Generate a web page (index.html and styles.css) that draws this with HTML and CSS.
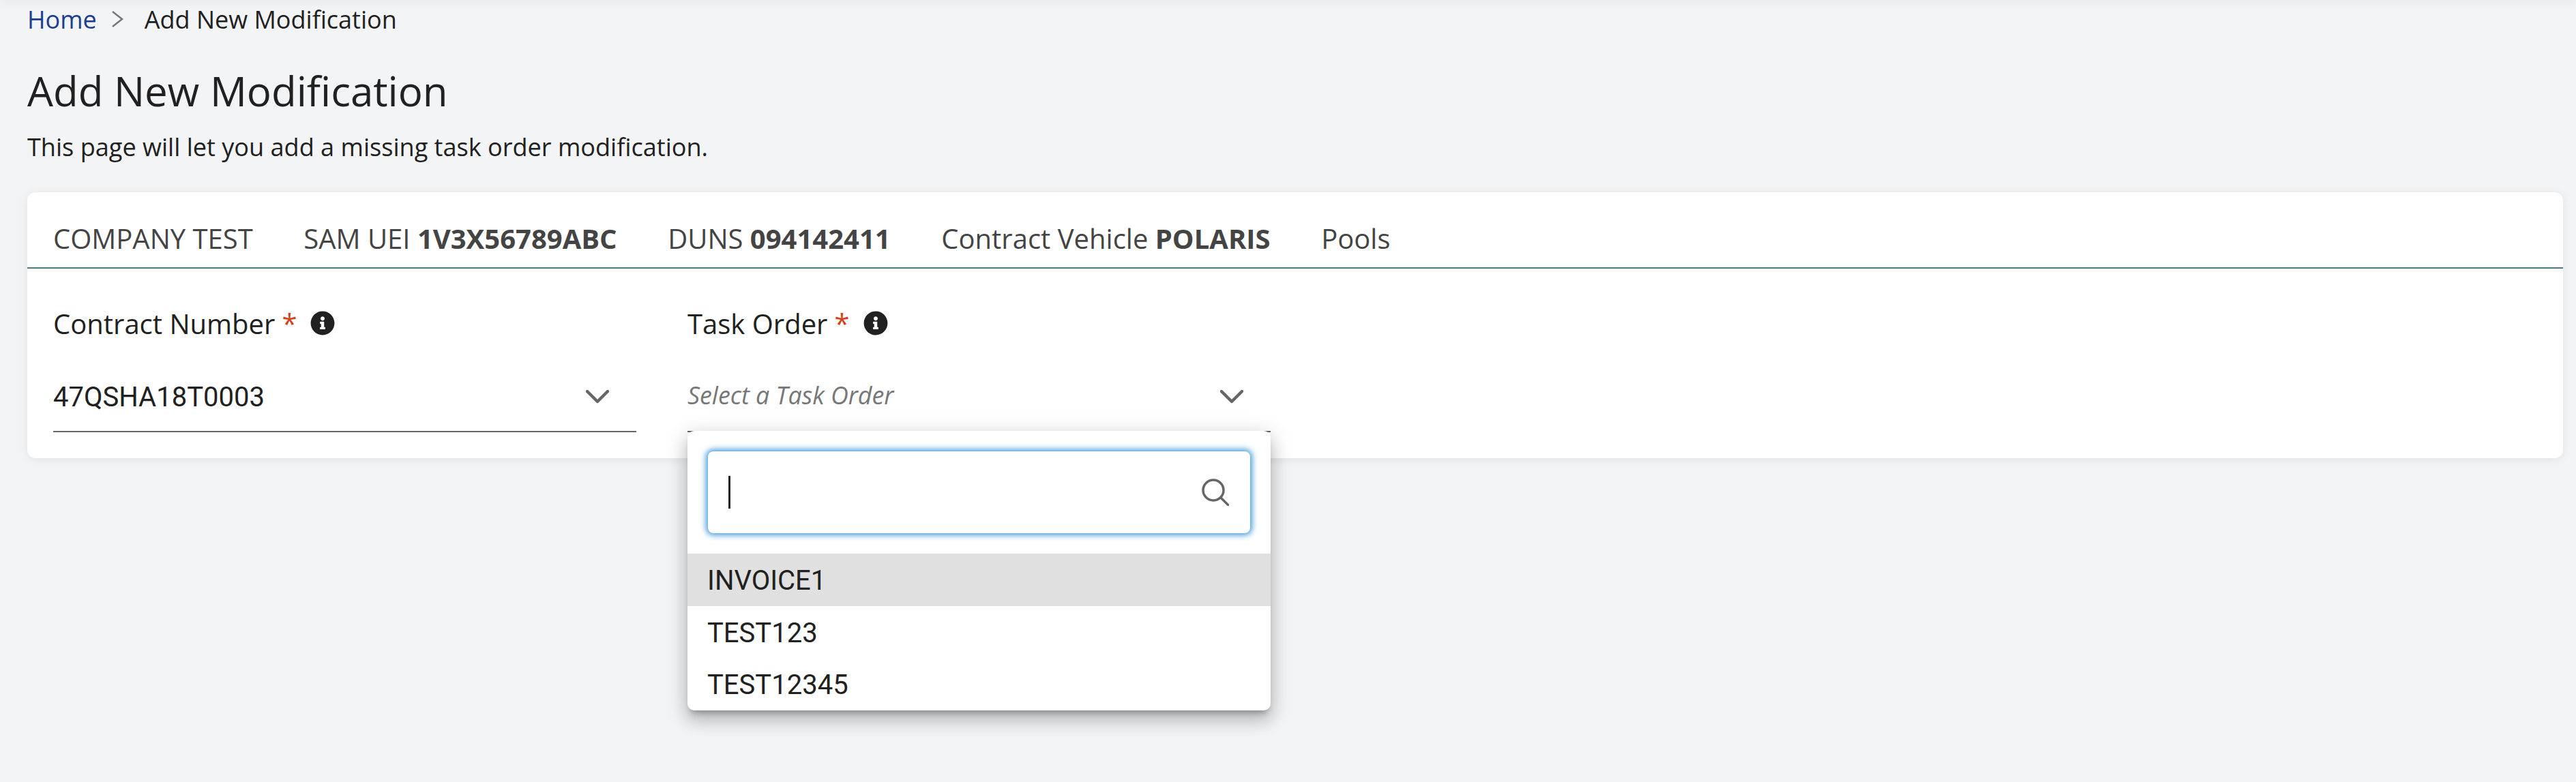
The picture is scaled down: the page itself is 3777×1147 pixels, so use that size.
FILE: index.html
```html
<!DOCTYPE html>
<html lang="en">
<head>
<meta charset="UTF-8" />
<title>Add New Modification</title>
<link rel="stylesheet" href="styles.css">
</head>
<body>

<div class="topbar"></div>

<main class="page">
  <nav class="breadcrumb">
    <a href="#">Home</a>
    <svg class="crumb-sep" viewBox="0 0 18 26"><path d="M2 2l14 11L2 24" /></svg>
    <span>Add New Modification</span>
  </nav>

  <h1>Add New Modification</h1>
  <p class="intro">This page will let you add a missing task order modification.</p>

  <section class="card">
    <div class="vendor-bar">
      <span>COMPANY TEST</span>
      <span>SAM UEI <b>1V3X56789ABC</b></span>
      <span>DUNS <b>094142411</b></span>
      <span>Contract Vehicle <b>POLARIS</b></span>
      <span>Pools</span>
    </div>

    <form class="fields">
      <div class="field">
        <label>Contract Number <span class="req">*</span>
          <svg class="info" viewBox="0 0 512 512"><path d="M256 8C119.043 8 8 119.083 8 256c0 136.997 111.043 248 248 248s248-111.003 248-248C504 119.083 392.957 8 256 8zm0 110c23.196 0 42 18.804 42 42s-18.804 42-42 42-42-18.804-42-42 18.804-42 42-42zm56 254c0 6.627-5.373 12-12 12h-88c-6.627 0-12-5.373-12-12v-24c0-6.627 5.373-12 12-12h12v-64h-12c-6.627 0-12-5.373-12-12v-24c0-6.627 5.373-12 12-12h64c6.627 0 12 5.373 12 12v100h12c6.627 0 12 5.373 12 12v24z" /></svg>
        </label>
        <div class="select">
          <span class="value">47QSHA18T0003</span>
          <svg class="chevron" viewBox="0 0 34 20"><path d="M2 2l15 15L32 2" /></svg>
        </div>
      </div>

      <div class="field">
        <label>Task Order <span class="req">*</span>
          <svg class="info" viewBox="0 0 512 512"><path d="M256 8C119.043 8 8 119.083 8 256c0 136.997 111.043 248 248 248s248-111.003 248-248C504 119.083 392.957 8 256 8zm0 110c23.196 0 42 18.804 42 42s-18.804 42-42 42-42-18.804-42-42 18.804-42 42-42zm56 254c0 6.627-5.373 12-12 12h-88c-6.627 0-12-5.373-12-12v-24c0-6.627 5.373-12 12-12h12v-64h-12c-6.627 0-12-5.373-12-12v-24c0-6.627 5.373-12 12-12h64c6.627 0 12 5.373 12 12v100h12c6.627 0 12 5.373 12 12v24z" /></svg>
        </label>
        <div class="select">
          <span class="placeholder">Select a Task Order</span>
          <svg class="chevron" viewBox="0 0 34 20"><path d="M2 2l15 15L32 2" /></svg>

          <div class="popup">
            <div class="search">
              <span class="caret"></span>
              <svg class="search-icon" viewBox="0 0 40 40"><circle cx="17" cy="17" r="15" /><path d="M28 28l11 11" /></svg>
            </div>
            <ul class="options">
              <li class="active">INVOICE1</li>
              <li>TEST123</li>
              <li>TEST12345</li>
            </ul>
          </div>
        </div>
      </div>
    </form>
  </section>
</main>

</body>
</html>
```

FILE: styles.css
```css
* {
  box-sizing: border-box;
}

html, body {
  height: 100%;
}

body {
  margin: 0;
  background-color: #f3f4f6;
  color: #212121;
  font-family: "Open Sans", sans-serif;
  overflow: hidden;
}

.topbar {
  height: 0;
  box-shadow: 0 0 14px 2px rgba(0, 0, 0, 0.12);
}

.page {
  padding: 0 19px 0 40px;
}

.breadcrumb {
  display: flex;
  align-items: center;
  height: 56px;
  font-size: 36px;
}

.breadcrumb a {
  color: #1b3f94;
  text-decoration: none;
}

.crumb-sep {
  width: 18px;
  height: 26px;
  margin: 0 31px 0 21px;
  fill: none;
  stroke: #777;
  stroke-width: 2.5;
}

h1 {
  margin: 44px 0 0;
  font-size: 60px;
  font-weight: 400;
  line-height: 66px;
}

.intro {
  margin: 24px 0 0;
  font-size: 36.1px;
  line-height: 50px;
}

.card {
  margin-top: 42px;
  background-color: #fff;
  border-radius: 12px;
  box-shadow: 0 2px 14px rgba(0, 0, 0, 0.08);
}

.vendor-bar {
  display: flex;
  gap: 74.6px;
  height: 112px;
  padding: 40px 38px 0;
  border-bottom: 2px solid #4a7c80;
  color: #444;
  font-size: 40px;
  line-height: 56px;
}

.vendor-bar b {
  font-weight: 700;
}

.fields {
  display: grid;
  grid-template-columns: 855px 855px;
  gap: 75px;
  padding: 55px 38px 38px;
}

label {
  display: flex;
  align-items: center;
  gap: 10px;
  height: 50px;
  font-size: 40px;
}

.req {
  color: #d0421b;
}

.info {
  width: 36px;
  height: 36px;
  margin-left: 10px;
  fill: #212121;
}

.select {
  position: relative;
  display: flex;
  align-items: center;
  justify-content: space-between;
  height: 104px;
  margin-top: 31px;
  border-bottom: 2px solid #666;
}

.value {
  font-family: Roboto, sans-serif;
  font-size: 40px;
  margin-top: 2px;
}

.placeholder {
  color: #777;
  font-size: 35.8px;
  font-style: italic;
  margin-top: -4px;
}

.chevron {
  width: 34px;
  height: 20px;
  margin: 2px 40px 0 0;
  fill: none;
  stroke: #666;
  stroke-width: 4.5;
  stroke-linecap: round;
  stroke-linejoin: round;
}

.popup {
  position: absolute;
  top: 100%;
  left: 0;
  right: 0;
  z-index: 10;
  padding-top: 30px;
  background-color: #fff;
  border-radius: 10px;
  box-shadow: 0 8px 10px -5px rgba(0, 0, 0, 0.3), 0 16px 24px 2px rgba(0, 0, 0, 0.14), 0 6px 30px 5px rgba(0, 0, 0, 0.12);
}

.search {
  display: flex;
  align-items: center;
  justify-content: space-between;
  height: 120px;
  margin: 0 30px;
  padding: 0 31px 0 30px;
  border-radius: 8px;
  box-shadow: 0 0 8px 3px rgba(60, 150, 215, 0.95);
}

.caret {
  width: 3px;
  height: 48px;
  background-color: #222;
}

.search-icon {
  width: 40px;
  height: 40px;
  fill: none;
  stroke: #666;
  stroke-width: 3.5;
  stroke-linecap: round;
}

.options {
  margin: 30px 0 0;
  padding: 0;
  list-style: none;
  font-family: Roboto, sans-serif;
  font-size: 40px;
}

.options li {
  height: 76.67px;
  padding-left: 29px;
  line-height: 80px;
}

.options li.active {
  background-color: #e0e0e0;
}

.options li:last-child {
  border-radius: 0 0 10px 10px;
}
```
